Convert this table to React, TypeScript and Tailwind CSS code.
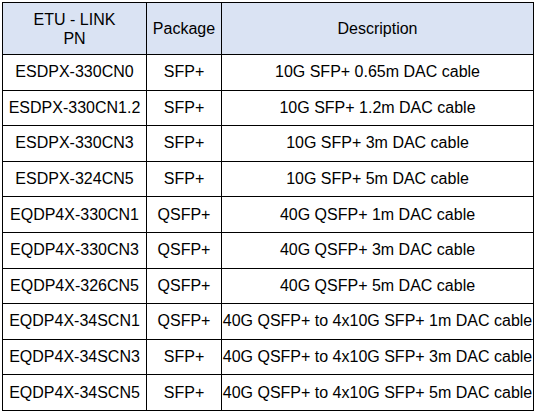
import React from "react";

const rows: [string, string, string][] = [
  ["ESDPX-330CN0", "SFP+", "10G SFP+ 0.65m DAC cable"],
  ["ESDPX-330CN1.2", "SFP+", "10G SFP+ 1.2m DAC cable"],
  ["ESDPX-330CN3", "SFP+", "10G SFP+ 3m DAC cable"],
  ["ESDPX-324CN5", "SFP+", "10G SFP+ 5m DAC cable"],
  ["EQDP4X-330CN1", "QSFP+", "40G QSFP+ 1m DAC cable"],
  ["EQDP4X-330CN3", "QSFP+", "40G QSFP+ 3m DAC cable"],
  ["EQDP4X-326CN5", "QSFP+", "40G QSFP+ 5m DAC cable"],
  ["EQDP4X-34SCN1", "QSFP+", "40G QSFP+ to 4x10G SFP+ 1m DAC cable"],
  ["EQDP4X-34SCN3", "SFP+", "40G QSFP+ to 4x10G SFP+ 3m DAC cable"],
  ["EQDP4X-34SCN5", "SFP+", "40G QSFP+ to 4x10G SFP+ 5m DAC cable"],
];

export default function App() {
  return (
    <div className="w-[536px] h-[415px] bg-white p-[2px] font-['Liberation_Sans',Arial,sans-serif] text-[16px] text-black">
      <table className="table-fixed border-collapse w-[531px]">
        <colgroup>
          <col className="w-[144px]" />
          <col className="w-[75px]" />
          <col className="w-[312px]" />
        </colgroup>
        <thead>
          <tr className="h-[52px] bg-[#dae3f3]">
            <th className="border border-black font-normal leading-[19px] px-1 text-center">
              ETU - LINK
              <br />
              PN
            </th>
            <th className="border border-black font-normal px-0 text-center">Package</th>
            <th className="border border-black font-normal px-0 text-center">Description</th>
          </tr>
        </thead>
        <tbody>
          {rows.map(([pn, pkg, desc]) => (
            <tr key={pn} className="h-[35.6px]">
              <td className="border border-black text-center px-0 whitespace-nowrap">{pn}</td>
              <td className="border border-black text-center px-0 whitespace-nowrap">{pkg}</td>
              <td className="border border-black text-center px-0 whitespace-nowrap">{desc}</td>
            </tr>
          ))}
        </tbody>
      </table>
    </div>
  );
}
